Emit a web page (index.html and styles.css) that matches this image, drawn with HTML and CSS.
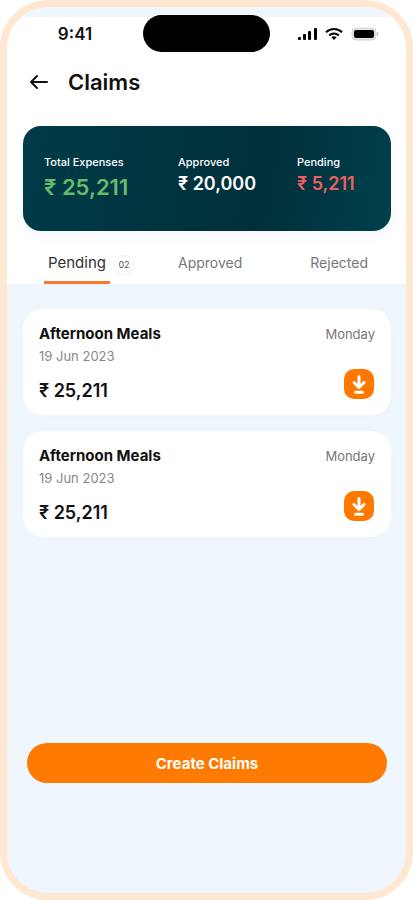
FILE: index.html
```html
<!DOCTYPE html>
<html lang="en">
<head>
<meta charset="utf-8">
<meta name="viewport" content="width=device-width, initial-scale=1">
<title>Claims</title>
<link rel="stylesheet" href="styles.css">
</head>
<body>
<div class="phone">
  <header class="top">
    <div class="status">
      <span class="time">9:41</span>
      <span class="island"></span>
      <span class="signals">
        <svg width="19" height="14" viewBox="0 0 19 14" aria-hidden="true"><rect x="0" y="10" width="3" height="3" rx="1"/><rect x="5" y="7" width="3" height="6" rx="1"/><rect x="10" y="4" width="3" height="9" rx="1"/><rect x="16" y="1" width="3" height="12" rx="1"/></svg>
        <svg width="18" height="14" viewBox="0 0 18 14" fill="none" stroke="#000" stroke-width="2" aria-hidden="true"><path d="M1 5.200a11.500 11.500 0 0 1 16 0M4.200 8.400a7 7 0 0 1 9.600 0"/><path d="M6.400 10.300a4 4 0 0 1 5.200 0L9 13z" fill="#000" stroke="none"/></svg>
        <svg width="28" height="14" viewBox="0 0 28 14" aria-hidden="true"><rect x="1" y="1" width="24" height="12" rx="4" fill="#e4e4e4" stroke="#d4d4d4"/><rect x="3" y="3" width="20" height="8" rx="2"/><path d="M26 5v4q1.500-.6 1.500-2T26 5z" fill="#bbb"/></svg>
      </span>
    </div>
    <div class="titlebar">
      <button class="back" type="button" aria-label="Back"><svg width="20" height="16" viewBox="0 0 20 16" fill="none" stroke="#111" stroke-width="2" stroke-linecap="round" stroke-linejoin="round" aria-hidden="true"><path d="M18 8H2M8 2L2 8l6 6"/></svg></button>
      <h1>Claims</h1>
    </div>
    <dl class="summary">
      <div class="total"><dt>Total Expenses</dt><dd>₹ 25,211</dd></div>
      <div><dt>Approved</dt><dd>₹ 20,000</dd></div>
      <div class="due"><dt>Pending</dt><dd>₹ 5,211</dd></div>
    </dl>
    <nav class="tabs">
      <button class="tab active" type="button"><span class="name">Pending</span><span class="count">02</span></button>
      <button class="tab" type="button">Approved</button>
      <button class="tab" type="button">Rejected</button>
    </nav>
  </header>
  <main class="list">
    <article class="claim">
      <div class="info"><h2>Afternoon Meals</h2><p class="date">19 Jun 2023</p><p class="amount">₹ 25,211</p></div>
      <div class="side"><span class="day">Monday</span>
        <button class="download" type="button" aria-label="Download"><svg width="30" height="30" viewBox="0 0 30 30" fill="none" stroke="#fff" stroke-width="3" stroke-linecap="round" stroke-linejoin="round" aria-hidden="true"><path d="M15 7.500V18M10 13.500l5 5 5-5M11.500 23.200h7"/></svg></button></div>
    </article>
    <article class="claim">
      <div class="info"><h2>Afternoon Meals</h2><p class="date">19 Jun 2023</p><p class="amount">₹ 25,211</p></div>
      <div class="side"><span class="day">Monday</span>
        <button class="download" type="button" aria-label="Download"><svg width="30" height="30" viewBox="0 0 30 30" fill="none" stroke="#fff" stroke-width="3" stroke-linecap="round" stroke-linejoin="round" aria-hidden="true"><path d="M15 7.500V18M10 13.500l5 5 5-5M11.500 23.200h7"/></svg></button></div>
    </article>
  </main>
  <footer class="actions"><button class="create" type="button">Create Claims</button></footer>
</div>
</body>
</html>
```
FILE: styles.css
```css
* { box-sizing: border-box; }
body { margin: 0; background: #fff; color: #111; font-family: Inter, "Noto Sans", sans-serif; }
h1, h2, p, dl, dd { margin: 0; }
button { margin: 0; padding: 0; border: 0; background: none; color: inherit; font: inherit; cursor: pointer; }
svg { display: block; }

.phone {
  display: flex;
  flex-direction: column;
  min-height: 100vh;
  border: 7px solid #ffe8d1;
  border-radius: 48px;
  background: #f0f6fd;
  overflow: hidden;
}
.top { padding-top: 8px; background: linear-gradient(#f0f6fb 10px, #fff 10px); }

.status { display: grid; grid-template-columns: 1fr 127px 1fr; align-items: center; justify-items: center; }
.island { width: 100%; height: 37px; border-radius: 19px; background: #000; }
.time { font-size: 17px; font-weight: 600; }
.signals { display: flex; align-items: center; gap: 8px; }

.titlebar { display: flex; align-items: center; gap: 19px; padding: 16px 22px 0; }
h1 { font-size: 22px; line-height: 28px; font-weight: 600; }

.summary {
  display: grid;
  grid-template-columns: 134px 119px 1fr;
  margin: 30px 15px 0 16px;
  padding: 29px 21px 30px;
  border-radius: 18px;
  background: linear-gradient(100deg, #003b48, #003540 35%, #002f3a 65%, #00414c);
  box-shadow: 0 4px 12px #dfe5f566;
  color: #fff;
}
dt { font-size: 11px; line-height: 14px; font-weight: 500; }
dd { margin-top: 3px; font-size: 18px; line-height: 24px; font-weight: 600; }
.total dd { margin-top: 4px; font-size: 22px; line-height: 28px; color: #64bd6a; }
.due dd { color: #ee6060; }

.tabs { display: grid; grid-template-columns: 134px 1fr auto; padding: 20px 38px 0 37px; }
.tab { display: flex; align-items: flex-start; gap: 4px; color: #777; font-size: 14px; line-height: 24px; }
.name { padding: 0 4px 6px; border-bottom: 3px solid #ff7728; color: #333; font-size: 15px; }
.count { margin-top: 4px; width: 20px; height: 20px; border: 1px solid #f1f1f1; border-radius: 50%; font-size: 9px; line-height: 18px; color: #555; }

.list { display: grid; gap: 16px; padding: 25px 15px 25px 16px; }
.claim { display: flex; justify-content: space-between; padding: 16px 16px 12px; border-radius: 20px; background: #fff; box-shadow: 0 0 8px #eaf4f9; }
h2 { font-size: 15px; line-height: 18px; font-weight: 700; }
.date { margin-top: 4px; font-size: 13px; line-height: 18px; color: #888; }
.amount { margin-top: 14px; font-size: 18px; line-height: 24px; font-weight: 600; }
.side { display: flex; flex-direction: column; align-items: flex-end; justify-content: space-between; }
.day { font-size: 13px; line-height: 18px; color: #777; }
.download { margin: 0 1px 4px 0; border-radius: 10px; background: #ff7900; }

.actions { margin-top: auto; padding: 0 19px 110px 20px; }
.create { width: 100%; height: 40px; border-radius: 20px; background: #ff7a00; color: #fff; font-size: 15px; font-weight: 700; }
```
